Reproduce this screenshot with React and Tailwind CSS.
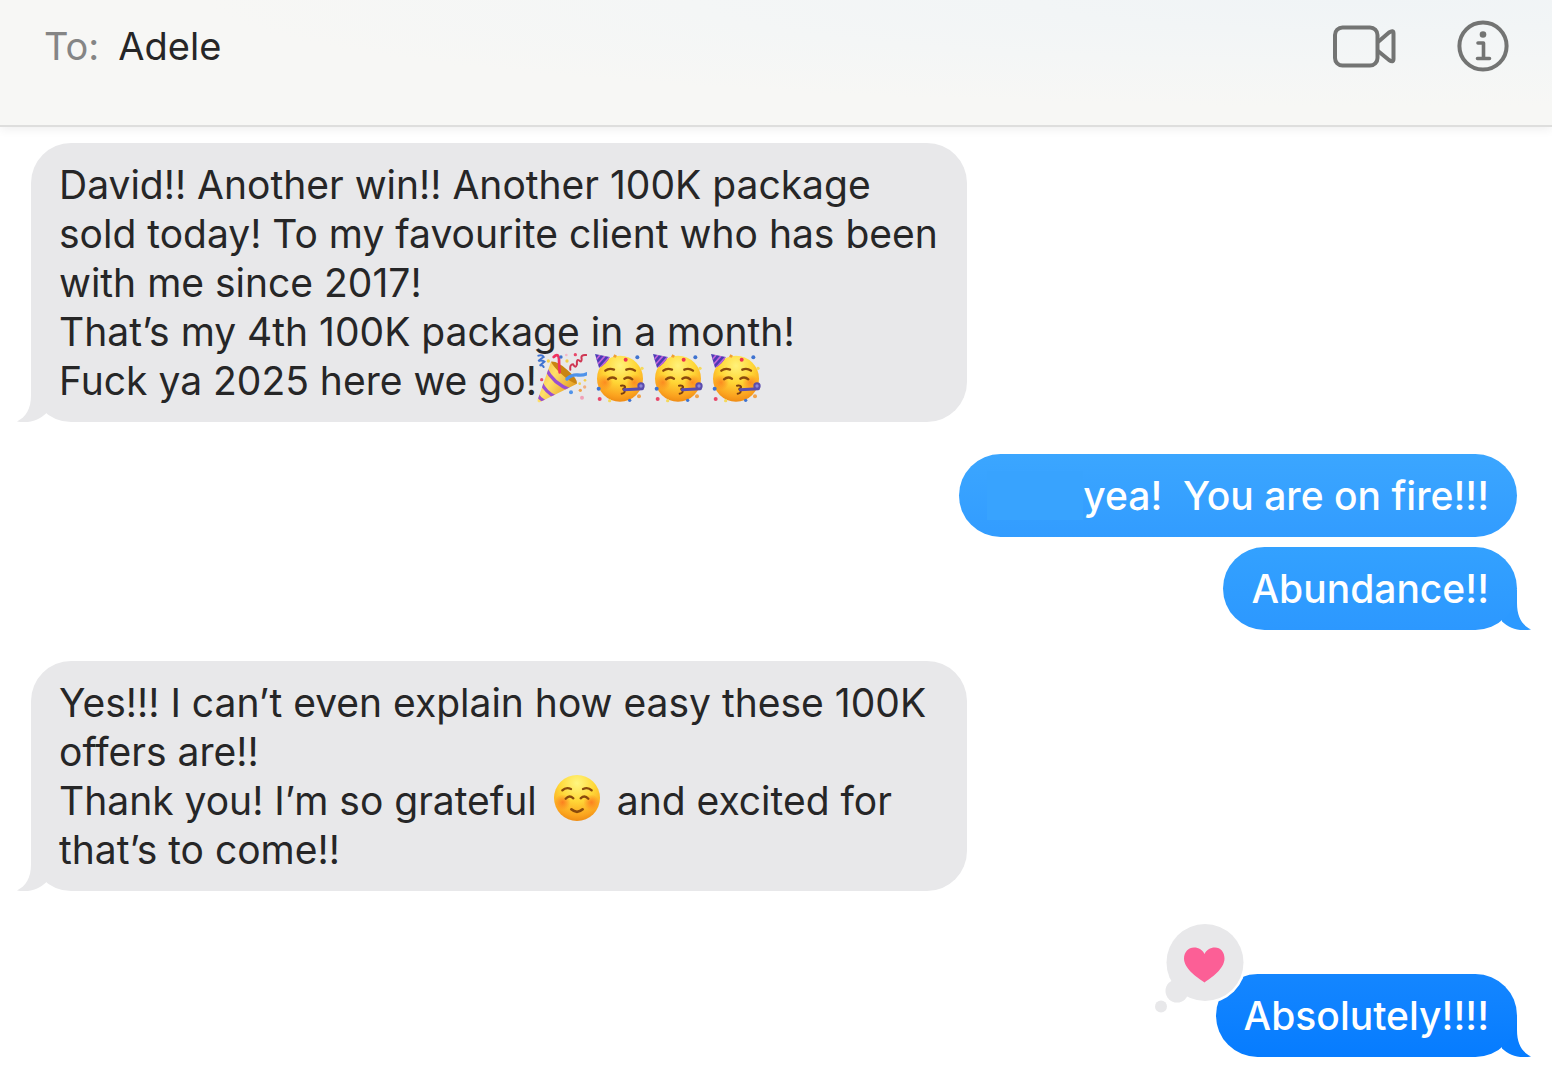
import React from "react";

function PartyPopper() {
  return (
    <svg role="img" aria-label="party popper" viewBox="0 0 150 150" className="-my-2 mr-2 inline-block size-[50px] align-baseline">
      <defs>
        <linearGradient id="cone" x1="0" y1="0" x2="1" y2="0.6">
          <stop offset="0" stopColor="#f0b32c" />
          <stop offset="0.45" stopColor="#ffe06a" />
          <stop offset="1" stopColor="#e39a1c" />
        </linearGradient>
        <clipPath id="coneClip">
          <path d="M42 26 L120 92 L8 148 Q0 148 2 140 Z" />
        </clipPath>
      </defs>
      <path d="M42 26 L120 92 L8 148 Q0 148 2 140 Z" fill="url(#cone)" />
      <g clipPath="url(#coneClip)" fill="none" stroke="#9a4fd0" strokeWidth="10">
        <path d="M26 46 Q48 92 102 112" />
        <path d="M12 88 Q26 118 56 132" />
        <path d="M0 124 Q8 138 24 146" />
      </g>
      <path d="M42 26 Q62 24 92 52 Q122 78 120 92 Q104 92 74 64 Q48 40 42 26 Z" fill="#c98412" />
      <path d="M50 12 Q64 -2 66 18 Q66 38 68 58" fill="none" stroke="#f0325f" strokeWidth="8" strokeLinecap="round" />
      <path d="M90 78 Q104 64 122 66 Q138 68 150 62" fill="none" stroke="#4f93ea" strokeWidth="10" strokeLinecap="round" />
      <path d="M4 8 Q16 4 20 12 Q10 18 4 24 Q14 20 22 26 Q12 34 8 38 Q16 34 20 42" fill="none" stroke="#3f73d0" strokeWidth="6" strokeLinecap="round" />
      <path d="M100 50 Q98 34 108 34 Q116 48 120 34 Q118 18 126 22 Q134 30 134 18 Q130 4 148 6" fill="none" stroke="#cf3653" strokeWidth="6" strokeLinecap="round" />
      <g>
        <circle cx="72" cy="12" r="5" fill="#3f73d0" />
        <circle cx="34" cy="24" r="5" fill="#f5cf4a" />
        <circle cx="90" cy="24" r="5" fill="#f5cf4a" />
        <circle cx="115" cy="5" r="5" fill="#e8486a" />
        <circle cx="88" cy="6" r="4" fill="#f3b8c8" />
        <circle cx="14" cy="80" r="5" fill="#e8486a" />
        <circle cx="102" cy="118" r="6" fill="#4f93ea" />
        <circle cx="130" cy="112" r="5" fill="#f0a34c" />
        <circle cx="143" cy="102" r="5" fill="#f0b080" />
        <circle cx="135" cy="134" r="6" fill="#f0a0b8" />
        <circle cx="144" cy="82" r="4" fill="#f5cf4a" />
        <circle cx="128" cy="92" r="4" fill="#f5cf4a" />
      </g>
    </svg>
  );
}

function PartyFace() {
  return (
    <svg role="img" aria-label="partying face" viewBox="0 0 150 150" className="-my-2 mr-2 inline-block size-[50px] align-baseline">
      <defs>
        <radialGradient id="pf" cx="0.5" cy="0.22" r="0.82">
          <stop offset="0" stopColor="#fff27a" />
          <stop offset="0.45" stopColor="#ffd636" />
          <stop offset="0.8" stopColor="#fba31f" />
          <stop offset="1" stopColor="#ec8512" />
        </radialGradient>
        <radialGradient id="pfCheek">
          <stop offset="0" stopColor="#fb7a1c" stopOpacity="0.75" />
          <stop offset="1" stopColor="#fb7a1c" stopOpacity="0" />
        </radialGradient>
        <clipPath id="hatClip">
          <path d="M0 3 L44 12 Q34 34 12 44 Z" />
        </clipPath>
      </defs>
      <circle cx="75" cy="77" r="69" fill="url(#pf)" />
      <circle cx="30" cy="88" r="24" fill="url(#pfCheek)" />
      <circle cx="118" cy="88" r="24" fill="url(#pfCheek)" />
      <path d="M0 3 L44 12 Q34 34 12 44 Z" fill="#4b3bb4" />
      <g clipPath="url(#hatClip)" stroke="#c264dc" strokeWidth="5">
        <path d="M2 22 L20 0" />
        <path d="M6 36 L34 4" />
        <path d="M14 46 L46 10" />
      </g>
      <g fill="none" stroke="#8a4a0c" strokeWidth="7" strokeLinecap="round">
        <path d="M31 53 Q42 44 57 50" />
        <path d="M94 50 Q108 44 120 53" />
        <path d="M39 79 Q50 69 63 77" />
        <path d="M88 77 Q101 69 112 79" />
      </g>
      <path d="M78 98 Q92 96 90 104 Q80 108 88 112 Q92 120 80 122" fill="none" stroke="#7a3f10" strokeWidth="6" strokeLinecap="round" />
      <path d="M88 110 L142 107" stroke="#5a4cae" strokeWidth="9" strokeLinecap="round" />
      <circle cx="138" cy="99" r="8" fill="#8f87d8" stroke="#5a4cae" strokeWidth="6" />
      <circle cx="92" cy="20" r="6" fill="#ef3550" />
      <circle cx="127" cy="13" r="6" fill="#3f73d0" />
      <path d="M58 4 L66 8 L62 14 L54 12 Z" fill="#f0a030" />
      <circle cx="141" cy="46" r="5" fill="#f5d95a" />
      <circle cx="11" cy="107" r="6" fill="#3f73d0" />
      <circle cx="14" cy="138" r="6" fill="#e8486a" />
      <circle cx="44" cy="143" r="5" fill="#f5d95a" />
      <circle cx="104" cy="142" r="5" fill="#3f73d0" />
      <circle cx="132" cy="130" r="6" fill="#f0a34c" />
    </svg>
  );
}

function SmilingFace() {
  return (
    <svg role="img" aria-label="smiling face" viewBox="0 0 150 150" className="-my-2 mx-1 inline-block size-[50px] align-baseline">
      <defs>
        <radialGradient id="sf" cx="0.5" cy="0.18" r="0.85">
          <stop offset="0" stopColor="#fff680" />
          <stop offset="0.45" stopColor="#ffd838" />
          <stop offset="0.82" stopColor="#fba51f" />
          <stop offset="1" stopColor="#ec8712" />
        </radialGradient>
        <radialGradient id="sfCheek">
          <stop offset="0" stopColor="#fb6f1c" stopOpacity="0.8" />
          <stop offset="1" stopColor="#fb6f1c" stopOpacity="0" />
        </radialGradient>
      </defs>
      <circle cx="75" cy="75" r="69" fill="url(#sf)" />
      <circle cx="32" cy="88" r="24" fill="url(#sfCheek)" />
      <circle cx="118" cy="88" r="24" fill="url(#sfCheek)" />
      <g fill="none" stroke="#8a4a0c" strokeWidth="7" strokeLinecap="round">
        <path d="M31 52 Q42 41 57 48" />
        <path d="M93 48 Q108 41 119 52" />
        <path d="M41 77 Q52 65 64 76" />
        <path d="M86 76 Q98 65 109 77" />
        <path d="M58 109 Q75 124 92 109" strokeWidth="8" />
      </g>
    </svg>
  );
}

function Tail({ className }) {
  return (
    <svg aria-hidden="true" viewBox="0 0 29 40" className={"absolute bottom-0 h-10 w-[29px] " + className}>
      <path d="M14 0 V13 C14 27 9 35 0 39.4 C12 41.5 22 38 29 31.4 V0 Z" fill="currentColor" />
    </svg>
  );
}

function Received({ className = "", children }) {
  return (
    <li className={"relative max-w-[936px] self-start text-[#262627] " + className}>
      <Tail className="-left-[14px] text-[#e8e8ea]" />
      <p className="relative rounded-[40px] bg-[#e8e8ea] px-7 py-[17px]">{children}</p>
    </li>
  );
}

function Sent({ fill, tail, className = "", extra, children }) {
  return (
    <li className={"relative self-end font-medium text-white " + className}>
      {tail && <Tail className={"-right-[14px] -scale-x-100 " + tail} />}
      <div className={"relative flex rounded-[42px] bg-linear-to-b px-7 py-[17px] " + fill}>{children}</div>
      {extra}
    </li>
  );
}

function HeartReaction() {
  return (
    <svg role="img" aria-label="Loved" viewBox="0 0 92 92" className="absolute -left-[62px] -top-[53px] size-[92px]">
      <circle cx="51" cy="41.5" r="41" fill="#fff" />
      <g fill="#e8e8ea">
        <circle cx="51" cy="41.5" r="38.5" />
        <circle cx="23" cy="70" r="11.5" />
        <circle cx="7" cy="85.500" r="6" />
      </g>
      <path d="M50.500 61.500 C44 57 30 48 30 37.500 C30 31 34.500 26.500 40 26.500 C45 26.500 48.500 29 50.500 33 C52.500 29 56 26.500 61 26.500 C66.500 26.500 70.500 31 70.500 37.500 C70.500 48 57 57 50.500 61.500 Z" fill="#fc5f96" />
    </svg>
  );
}

export default function App() {
  return (
    <div className="min-h-screen bg-white font-['Inter','Liberation_Sans',sans-serif] text-[39px] leading-[49px]">
      <header className="flex h-[127px] items-start justify-between border-b-2 border-[#dededd] bg-[radial-gradient(ellipse_at_88%_0%,#f0f4f6_0%,#f4f6f6_35%,#f7f7f5_60%)] pl-11 pr-[43px] pt-5 shadow-[0_2px_10px_rgba(0,0,0,0.07)]">
        <div className="flex gap-[19px] pt-[2px] text-[38px]">
          <span className="text-[#858585]">To:</span>
          <h1 className="text-[#262627]">Adele</h1>
        </div>
        <div className="flex gap-[61px]">
          <button type="button" aria-label="Start video call" className="text-[#737473]">
            <svg viewBox="0 0 64 52" className="h-[52px] w-16" fill="none" stroke="currentColor" strokeWidth="4" strokeLinejoin="round">
              <rect x="3" y="7.500" width="42.500" height="38" rx="7.500" />
              <path d="M46 22 L57 12.500 Q61.500 9.500 61.500 13.500 V39 Q61.500 43 57 40 L46 31" />
            </svg>
          </button>
          <button type="button" aria-label="Conversation details" className="text-[#737473]">
            <svg viewBox="0 0 52 52" className="size-[52px]" fill="none" stroke="currentColor" strokeWidth="4">
              <circle cx="26" cy="26" r="23.600" />
              <circle cx="26" cy="14.500" r="3.300" fill="currentColor" stroke="none" />
              <path d="M21 23 H26.500 V38.500 M20.500 38.500 H32.500" strokeWidth="3.600" strokeLinecap="round" strokeLinejoin="round" />
            </svg>
          </button>
        </div>
      </header>

      <main>
        <ul className="flex flex-col pb-6 pl-[31px] pr-[35px] pt-4">
          <Received>
            David!! Another win!! Another 100K package sold today! To my favourite client who has been with me since 2017!
            <br />
            That’s my 4th 100K package in a month!
            <br />
            <span className="whitespace-nowrap">
              Fuck ya 2025 here we go!
              <PartyPopper />
              <PartyFace />
              <PartyFace />
              <PartyFace />
            </span>
          </Received>

          <Sent fill="from-[#3ba6ff] to-[#329cff]" className="mt-8">
            <span className="w-24 bg-[#38a3fe]" />
            <p>yea!&nbsp; You are on fire!!!</p>
          </Sent>

          <Sent fill="from-[#33a1ff] to-[#2c98ff]" tail="text-[#2c99ff]" className="mt-[10px]">
            <p>Abundance!!</p>
          </Sent>

          <Received className="mt-[31px]">
            Yes!!! I can’t even explain how easy these 100K offers are!!
            <br />
            <span>Thank you! I’m so grateful </span>
            <SmilingFace />
            <span> and excited for </span>
            <span>that’s to come!!</span>
          </Received>

          <Sent fill="from-[#1486ff] to-[#067cff]" tail="text-[#077dff]" className="mt-[83px]" extra={<HeartReaction />}>
            <p>Absolutely!!!!</p>
          </Sent>
        </ul>
      </main>
    </div>
  );
}
